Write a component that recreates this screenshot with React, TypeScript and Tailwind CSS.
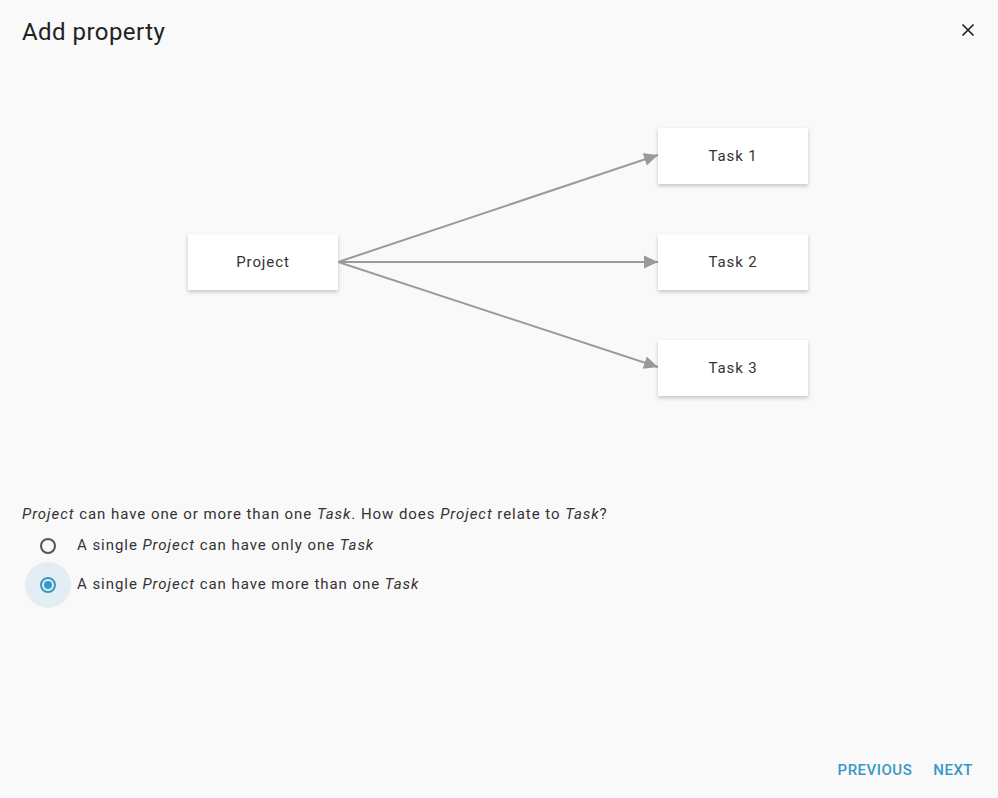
import React from "react";

const Node = ({ label }: { label: string }) => (
  <div className="w-[150px] h-[56px] bg-white flex items-center justify-center text-[15px] text-[#333333] tracking-[0.9px] shadow-[0_2px_4px_rgba(0,0,0,0.22)]">
    {label}
  </div>
);

const Arrows = () => (
  <svg width="320" height="268" viewBox="0 0 320 268" className="shrink-0">
    <defs>
      <marker id="head" markerWidth="14" markerHeight="14" refX="14" refY="7" orient="auto" markerUnits="userSpaceOnUse">
        <path d="M0,0.5 L14,7 L0,13.5 z" fill="#9a9a9a" />
      </marker>
    </defs>
    <line x1="0" y1="134" x2="320" y2="27" stroke="#9a9a9a" strokeWidth="2" markerEnd="url(#head)" />
    <line x1="0" y1="134" x2="320" y2="134" stroke="#9a9a9a" strokeWidth="2" markerEnd="url(#head)" />
    <line x1="0" y1="134" x2="320" y2="239" stroke="#9a9a9a" strokeWidth="2" markerEnd="url(#head)" />
  </svg>
);

const Radio = ({ checked, children }: { checked?: boolean; children: React.ReactNode }) => (
  <div className="flex items-center h-[39px]">
    <div className={`w-[46px] h-[46px] rounded-full flex items-center justify-center shrink-0 ${checked ? "bg-[#e2eef3]" : ""}`}>
      <div
        className={`w-[16px] h-[16px] rounded-full border-2 flex items-center justify-center ${
          checked ? "border-[#3a98c8]" : "border-[#555555]"
        }`}
      >
        {checked && <div className="w-[8px] h-[8px] rounded-full bg-[#3a98c8]" />}
      </div>
    </div>
    <span className="ml-[6px] text-[15px] text-[#333333] tracking-[0.95px]">{children}</span>
  </div>
);

export default function App() {
  return (
    <div className="h-[798px] w-full bg-[#f9f9f9] flex flex-col font-['Roboto',sans-serif]">
      <div className="flex items-start justify-between pl-[22px] pr-[23px] pt-[17px]">
        <h1 className="text-[24px] leading-[30px] text-[#222222] tracking-[0.45px]">Add property</h1>
        <button className="mt-[6px] text-[#222222]">
          <svg width="14" height="14" viewBox="0 0 14 14">
            <path d="M1.5 1.5 L12.5 12.5 M12.5 1.5 L1.5 12.5" stroke="#222" strokeWidth="1.7" />
          </svg>
        </button>
      </div>

      <div className="flex items-center ml-[188px] mt-[81px]">
        <Node label="Project" />
        <Arrows />
        <div className="flex flex-col gap-[50px]">
          <Node label="Task 1" />
          <Node label="Task 2" />
          <Node label="Task 3" />
        </div>
      </div>

      <p className="mt-[108px] ml-[22px] text-[15px] leading-[20px] text-[#333333] tracking-[0.95px]">
        <i>Project</i> can have one or more than one <i>Task</i>. How does <i>Project</i> relate to <i>Task</i>?
      </p>
      <div className="ml-[25px] mt-[2px] flex flex-col">
        <Radio>
          A single <i>Project</i> can have only one <i>Task</i>
        </Radio>
        <Radio checked>
          A single <i>Project</i> can have more than one <i>Task</i>
        </Radio>
      </div>

      <div className="flex-1" />

      <div className="flex justify-end items-center gap-[5px] pr-[17px] pb-[14px]">
        <button className="px-2 h-[28px] text-[15px] font-medium tracking-[0.5px] text-[#3a98c8]">PREVIOUS</button>
        <button className="px-2 h-[28px] text-[15px] font-medium tracking-[0.5px] text-[#3a98c8]">NEXT</button>
      </div>
    </div>
  );
}
